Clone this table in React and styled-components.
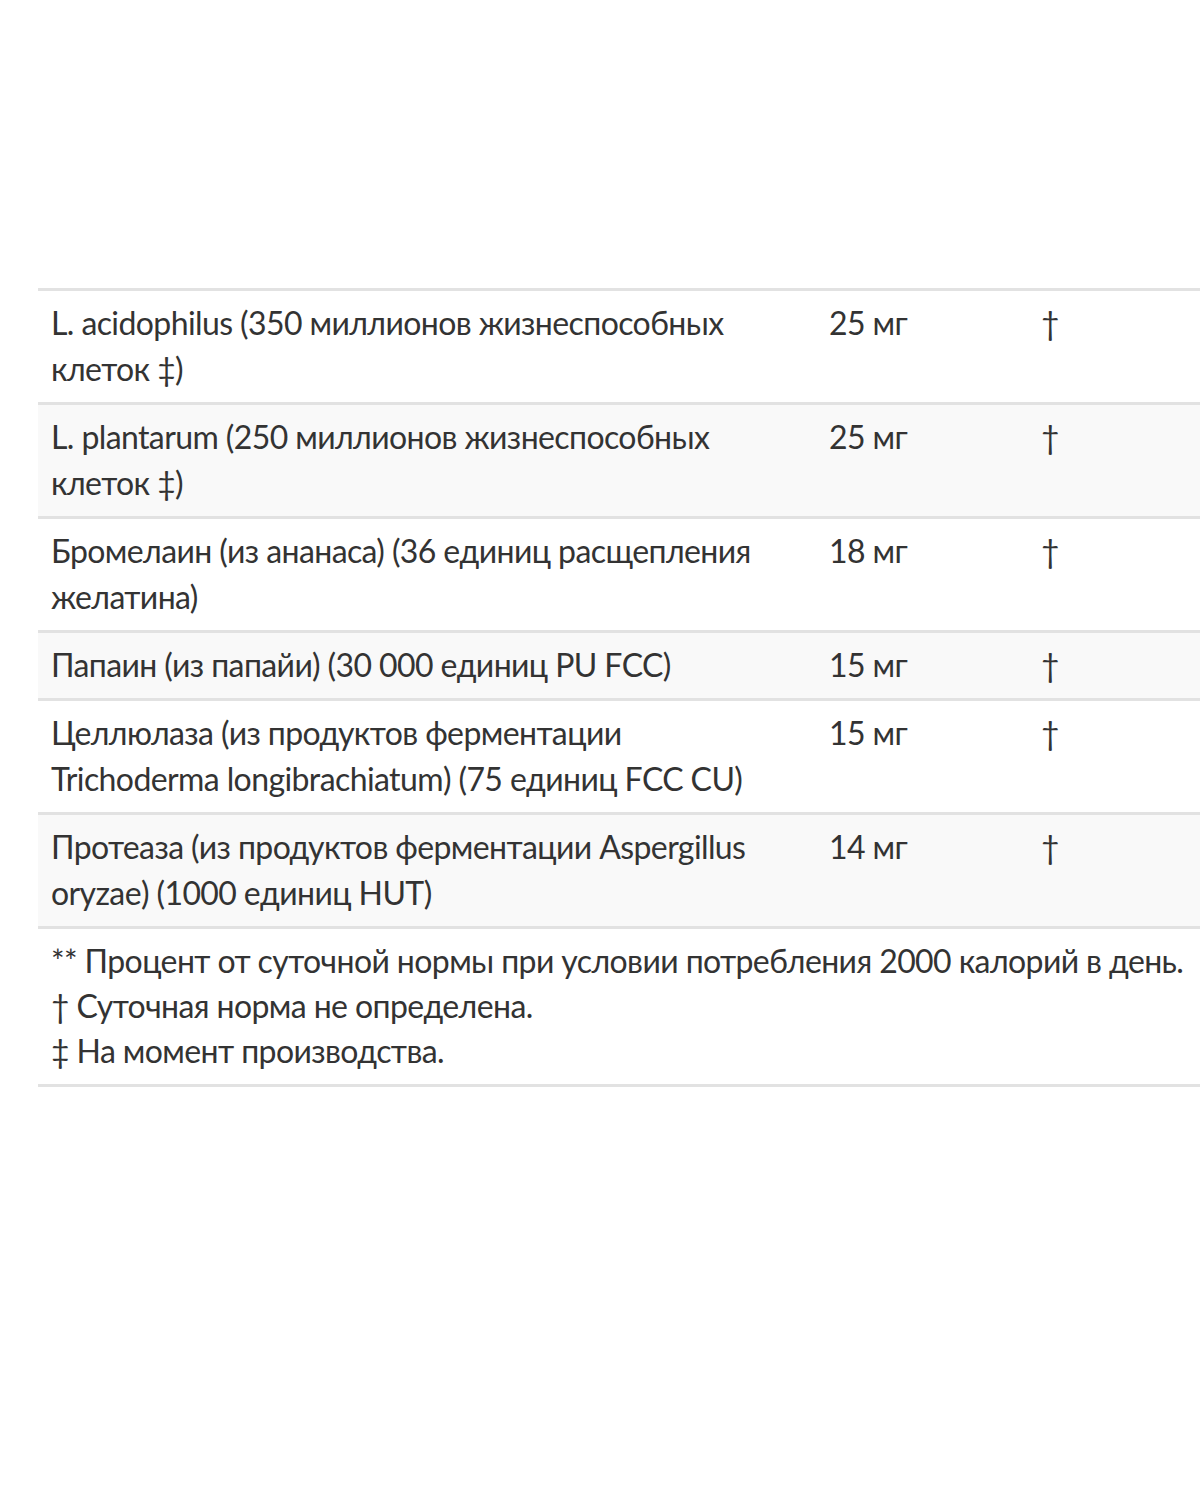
import React from 'react';
import styled, { createGlobalStyle } from 'styled-components';

const GlobalStyle = createGlobalStyle`
    html, body {
        margin: 0;
        padding: 0;
        background: #ffffff;
        overflow: hidden;
    }
`;

const Page = styled.div`
    width: 1200px;
    height: 1500px;
    padding-top: 288px;
    padding-left: 38px;
    box-sizing: border-box;
    overflow: hidden;
    font-family: Lato, "Liberation Sans", sans-serif;
    color: #333333;`;

const Table = styled.table`
    width: 1200px;
    border-collapse: collapse;
    table-layout: fixed;
    font-size: 32px;
    line-height: 46px;`;

const Row = styled.tr`
    background: ${props => props.shaded ? '#f9f9f9' : '#ffffff'};
    border-top: 3px solid #e2e2e2;
    border-bottom: 3px solid #e2e2e2;`;

const Cell = styled.td`
    vertical-align: top;
    padding: 9px ${props => props.wide ? '24px' : '12px'} 10px 13px;
    letter-spacing: -0.6px;`;

const Note = styled.td`
    padding: 9px 12px 11px 13px;
    line-height: 45px;
    letter-spacing: -0.6px;`;

const NoteLine = styled.div`
    white-space: nowrap;`;

const rows = [
    ['L. acidophilus (350 миллионов жизнеспособных клеток ‡)', '25 мг'],
    ['L. plantarum (250 миллионов жизнеспособных клеток ‡)', '25 мг'],
    ['Бромелаин (из ананаса) (36 единиц расщепления желатина)', '18 мг'],
    ['Папаин (из папайи) (30 000 единиц PU FCC)', '15 мг'],
    ['Целлюлаза (из продуктов ферментации Trichoderma longibrachiatum) (75 единиц FCC CU)', '15 мг'],
    ['Протеаза (из продуктов ферментации Aspergillus oryzae) (1000 единиц HUT)', '14 мг'],
];

const App = () => {
    return (
        <Page>
            <GlobalStyle />
            <Table>
                <colgroup>
                    <col style={{ width: '778px' }} />
                    <col style={{ width: '212px' }} />
                    <col />
                </colgroup>
                <tbody>
                    {rows.map((r, i) => (
                        <Row key={i} shaded={i % 2 === 1 ? 1 : 0}>
                            <Cell wide={1}>{r[0]}</Cell>
                            <Cell>{r[1]}</Cell>
                            <Cell>†</Cell>
                        </Row>
                    ))}
                    <Row>
                        <Note colSpan={3}>
                            <NoteLine>** Процент от суточной нормы при условии потребления 2000 калорий в день.</NoteLine>
                            <NoteLine>† Суточная норма не определена.</NoteLine>
                            <NoteLine>‡ На момент производства.</NoteLine>
                        </Note>
                    </Row>
                </tbody>
            </Table>
        </Page>
    );
}
export default App;
